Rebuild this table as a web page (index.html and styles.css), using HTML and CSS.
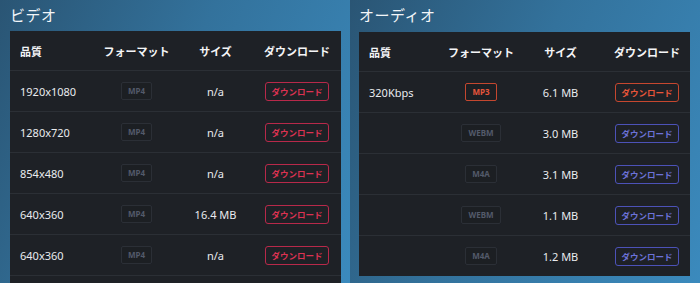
FILE: index.html
```html
<!DOCTYPE html>
<html lang="ja">
<head>
<meta charset="utf-8">
<link rel="stylesheet" href="styles.css">
</head>
<body>
<div class="page">
  <section class="col col-video">
    <h2 class="title">ビデオ</h2>
    <div class="panel">
      <div class="row head">
        <div class="c1">品質</div><div class="c">フォーマット</div><div class="c">サイズ</div><div class="c">ダウンロード</div>
      </div>
      <div class="row">
        <div class="c1">1920x1080</div><div class="c"><span class="badge">MP4</span></div><div class="c">n/a</div><div class="c"><span class="btn red">ダウンロード</span></div>
      </div>
      <div class="row">
        <div class="c1">1280x720</div><div class="c"><span class="badge">MP4</span></div><div class="c">n/a</div><div class="c"><span class="btn red">ダウンロード</span></div>
      </div>
      <div class="row">
        <div class="c1">854x480</div><div class="c"><span class="badge">MP4</span></div><div class="c">n/a</div><div class="c"><span class="btn red">ダウンロード</span></div>
      </div>
      <div class="row">
        <div class="c1">640x360</div><div class="c"><span class="badge">MP4</span></div><div class="c">16.4 MB</div><div class="c"><span class="btn red">ダウンロード</span></div>
      </div>
      <div class="row">
        <div class="c1">640x360</div><div class="c"><span class="badge">MP4</span></div><div class="c">n/a</div><div class="c"><span class="btn red">ダウンロード</span></div>
      </div>
      <div class="row last"></div>
    </div>
  </section>
  <section class="col col-audio">
    <h2 class="title">オーディオ</h2>
    <div class="panel">
      <div class="row head">
        <div class="c1">品質</div><div class="c">フォーマット</div><div class="c">サイズ</div><div class="c">ダウンロード</div>
      </div>
      <div class="row">
        <div class="c1">320Kbps</div><div class="c"><span class="badge orange">MP3</span></div><div class="c">6.1 MB</div><div class="c"><span class="btn orange">ダウンロード</span></div>
      </div>
      <div class="row">
        <div class="c1"></div><div class="c"><span class="badge">WEBM</span></div><div class="c">3.0 MB</div><div class="c"><span class="btn blue">ダウンロード</span></div>
      </div>
      <div class="row">
        <div class="c1"></div><div class="c"><span class="badge">M4A</span></div><div class="c">3.1 MB</div><div class="c"><span class="btn blue">ダウンロード</span></div>
      </div>
      <div class="row">
        <div class="c1"></div><div class="c"><span class="badge">WEBM</span></div><div class="c">1.1 MB</div><div class="c"><span class="btn blue">ダウンロード</span></div>
      </div>
      <div class="row last">
        <div class="c1"></div><div class="c"><span class="badge">M4A</span></div><div class="c">1.2 MB</div><div class="c"><span class="btn blue">ダウンロード</span></div>
      </div>
    </div>
  </section>
</div>
</body>
</html>
```

FILE: styles.css
```css
html, body {
  margin: 0;
  padding: 0;
  height: 100%;
  overflow: hidden;
}
body {
  font-family: "Noto Sans", "Noto Sans CJK JP", sans-serif;
  color: #e9ebef;
}
.page {
  display: flex;
  height: 283px;
}
.col {
  width: 350px;
  box-sizing: border-box;
  background: linear-gradient(115deg, #2a5574 0%, #33729c 45%, #3b8abd 100%);
}
.col-video {
  padding: 3px 9px 0 10px;
}
.col-audio {
  padding: 3px 10px 0 9px;
}
.title {
  margin: 0 0 4px;
  height: 24px;
  line-height: 24px;
  font-size: 15px;
  font-weight: 400;
  color: #f2f5f8;
  letter-spacing: 0.5px;
}
.col-audio .title {
  margin-bottom: 5px;
}
.panel {
  background: #1e2126;
}
.row {
  display: grid;
  height: 40px;
  align-items: center;
  border-bottom: 1px solid #2b2f35;
  font-size: 11px;
}
.col-video .row {
  grid-template-columns: 85px 83px 75px 88px;
}
.col-audio .row {
  grid-template-columns: 86px 72px 87px 86px;
}
.row.head {
  height: 39px;
  font-weight: 700;
  color: #f4f5f7;
}
.row.last {
  border-bottom: none;
}
.c1 {
  padding-left: 10px;
}
.c {
  text-align: center;
}
.badge {
  display: inline-block;
  box-sizing: border-box;
  height: 18px;
  line-height: 16px;
  padding: 0 6px;
  border: 1px solid #2b2f36;
  border-radius: 2px;
  font-size: 8px;
  font-weight: 700;
  color: #535a6a;
  background: #1c1f23;
}
.badge.orange {
  border-color: #c4472f;
  color: #e6553b;
}
.btn {
  display: inline-block;
  box-sizing: border-box;
  height: 19px;
  line-height: 17px;
  padding: 0 5px;
  border: 1px solid;
  border-radius: 3px;
  font-size: 8.5px;
  font-weight: 700;
}
.btn.red {
  border-color: #b8294a;
  color: #dc3252;
}
.btn.orange {
  border-color: #c6472f;
  color: #e8553a;
}
.btn.blue {
  border-color: #4c52b8;
  color: #6c72d8;
}
```
